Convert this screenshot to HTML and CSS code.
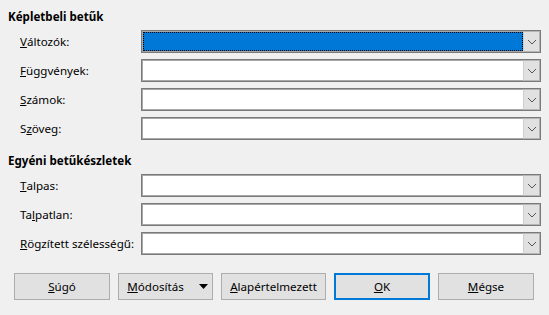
FILE: index.html
```html
<!DOCTYPE html>
<html lang="hu">
<head>
  <meta charset="UTF-8">
  <title>Betűkészletek</title>
  <link rel="stylesheet" href="styles.css">
</head>
<body>
  <div class="ablak">
    <h3 class="cim">Képletbeli betűk</h3>
    <div class="sorok">
      <label><u>V</u>áltozók:</label>
      <div class="combo aktiv"><span class="mezo"></span><span class="nyil"><svg width="10" height="6" viewBox="0 0 10 6"><path d="M1 1l4 4 4-4" fill="none" stroke="#555" stroke-width="1"/></svg></span></div>

      <label><u>F</u>üggvények:</label>
      <div class="combo"><span class="mezo"></span><span class="nyil"><svg width="10" height="6" viewBox="0 0 10 6"><path d="M1 1l4 4 4-4" fill="none" stroke="#555" stroke-width="1"/></svg></span></div>

      <label><u>S</u>zámok:</label>
      <div class="combo"><span class="mezo"></span><span class="nyil"><svg width="10" height="6" viewBox="0 0 10 6"><path d="M1 1l4 4 4-4" fill="none" stroke="#555" stroke-width="1"/></svg></span></div>

      <label>S<u>z</u>öveg:</label>
      <div class="combo"><span class="mezo"></span><span class="nyil"><svg width="10" height="6" viewBox="0 0 10 6"><path d="M1 1l4 4 4-4" fill="none" stroke="#555" stroke-width="1"/></svg></span></div>
    </div>

    <h3 class="cim masodik">Egyéni betűkészletek</h3>
    <div class="sorok">
      <label><u>T</u>alpas:</label>
      <div class="combo"><span class="mezo"></span><span class="nyil"><svg width="10" height="6" viewBox="0 0 10 6"><path d="M1 1l4 4 4-4" fill="none" stroke="#555" stroke-width="1"/></svg></span></div>

      <label>Ta<u>l</u>patlan:</label>
      <div class="combo"><span class="mezo"></span><span class="nyil"><svg width="10" height="6" viewBox="0 0 10 6"><path d="M1 1l4 4 4-4" fill="none" stroke="#555" stroke-width="1"/></svg></span></div>

      <label><u>R</u>ögzített szélességű:</label>
      <div class="combo"><span class="mezo"></span><span class="nyil"><svg width="10" height="6" viewBox="0 0 10 6"><path d="M1 1l4 4 4-4" fill="none" stroke="#555" stroke-width="1"/></svg></span></div>
    </div>

    <div class="gombok">
      <button><u>S</u>úgó</button>
      <button class="menu"><u>M</u>ódosítás <svg class="haromszog" width="9" height="5" viewBox="0 0 9 5"><path d="M0 0h9L4.5 5z" fill="#000"/></svg></button>
      <button class="szeles"><u>A</u>lapértelmezett</button>
      <button class="ok"><u>O</u>K</button>
      <button><u>M</u>égse</button>
    </div>
  </div>
</body>
</html>
```

FILE: styles.css
```css
body {
  margin: 0;
  background-color: #f0f0f0;
  font-family: 'Noto Sans', 'Open Sans', sans-serif;
  font-size: 11.6px;
  color: #000;
}

.ablak {
  padding: 8px 8px 0 8px;
}

.cim {
  margin: 0;
  font-size: 11.6px;
  font-weight: bold;
  height: 17px;
  line-height: 17px;
}

.masodik {
  margin-top: 12px;
}

.sorok {
  display: grid;
  grid-template-columns: 121px 400px;
  row-gap: 6px;
  margin-top: 5px;
  padding-left: 12px;
}

label {
  display: flex;
  align-items: center;
  height: 23px;
}

.combo {
  display: flex;
  height: 23px;
  box-sizing: border-box;
  border: 1px solid #7a7a7a;
  box-shadow: inset 0 0 0 1px #a8a8a8;
  background-color: #fff;
}

.mezo {
  flex: 1;
}

.aktiv .mezo {
  background-color: #0078d7;
  outline: 1px dotted #000;
  outline-offset: -1px;
  margin: 1px 0 1px 1px;
}

.nyil {
  width: 17px;
  display: flex;
  align-items: center;
  justify-content: center;
  background-color: #e1e1e1;
  border: 1px solid #b5b5b5;
  border-left-color: #cfcfcf;
  box-sizing: border-box;
}

.gombok {
  display: flex;
  gap: 8px;
  margin-top: 18px;
  padding-left: 6px;
}

button {
  font-family: inherit;
  font-size: 11.6px;
  width: 96px;
  height: 27px;
  background-color: #e1e1e1;
  border: 1px solid #adadad;
  color: #000;
  padding: 0;
}

.menu {
  width: 95px;
  padding-left: 4px;
}

.haromszog {
  margin-left: 12px;
  vertical-align: 2px;
}

.szeles {
  width: 105px;
}

.ok {
  border: 2px solid #0078d7;
}
```
